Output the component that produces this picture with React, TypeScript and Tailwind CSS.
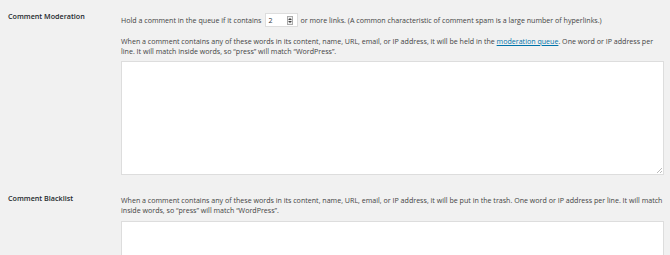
import React from 'react';

const App: React.FC = () => {
  return (
    <div className="w-[670px] h-[255px] overflow-hidden bg-[#f1f1f1] text-[#444] font-['Open_Sans',sans-serif] text-[7.1px] leading-[10px]">
      {/* Comment Moderation */}
      <div className="flex">
        <div className="w-[121px] shrink-0 pl-[8px] pt-[11px] text-[7.2px] font-semibold text-[#23282d]">Comment Moderation</div>
        <div className="w-[543px] pt-[13px]">
          <div className="flex items-center h-[14px] whitespace-nowrap">
            <span>Hold a comment in the queue if it contains</span>
            <div className="ml-[3px] mr-[3px] w-[33px] h-[14px] bg-white border border-[#ddd] flex items-center justify-between pl-[3px] pr-[4px]">
              <span className="text-[#32373c]">2</span>
              <div className="w-[6px] h-[9px] border border-[#aaa] bg-[#eee] flex flex-col items-center justify-center gap-[1px]">
                <div className="w-0 h-0 border-l-[2px] border-r-[2px] border-b-[2px] border-l-transparent border-r-transparent border-b-[#444]" />
                <div className="w-0 h-0 border-l-[2px] border-r-[2px] border-t-[2px] border-l-transparent border-r-transparent border-t-[#444]" />
              </div>
            </div>
            <span>or more links. (A common characteristic of comment spam is a large number of hyperlinks.)</span>
          </div>
          <p className="mt-[9px]">
            When a comment contains any of these words in its content, name, URL, email, or IP address, it will be held in the{' '}
            <a className="text-[#0073aa] underline">moderation queue</a>. One word or IP address per line. It will match inside words, so &ldquo;press&rdquo; will match &ldquo;WordPress&rdquo;.
          </p>
          <div className="relative mt-[5px] h-[114px] bg-white border border-[#ddd]">
            <div className="absolute right-[1px] bottom-[1px] w-[5px] h-[5px] bg-[linear-gradient(135deg,transparent_50%,#bbb_50%,#bbb_60%,transparent_60%,transparent_75%,#bbb_75%,#bbb_85%,transparent_85%)]" />
          </div>
        </div>
      </div>

      {/* Comment Blacklist */}
      <div className="flex">
        <div className="w-[121px] shrink-0 pl-[8px] pt-[18px] text-[7.2px] font-semibold text-[#23282d]">Comment Blacklist</div>
        <div className="w-[543px] pt-[20px]">
          <p>
            When a comment contains any of these words in its content, name, URL, email, or IP address, it will be put in the trash. One word or IP address per line. It will match inside words, so &ldquo;press&rdquo; will match &ldquo;WordPress&rdquo;.
          </p>
          <div className="mt-[6px] h-[114px] bg-white border border-[#ddd]" />
        </div>
      </div>
    </div>
  );
};

export default App;
